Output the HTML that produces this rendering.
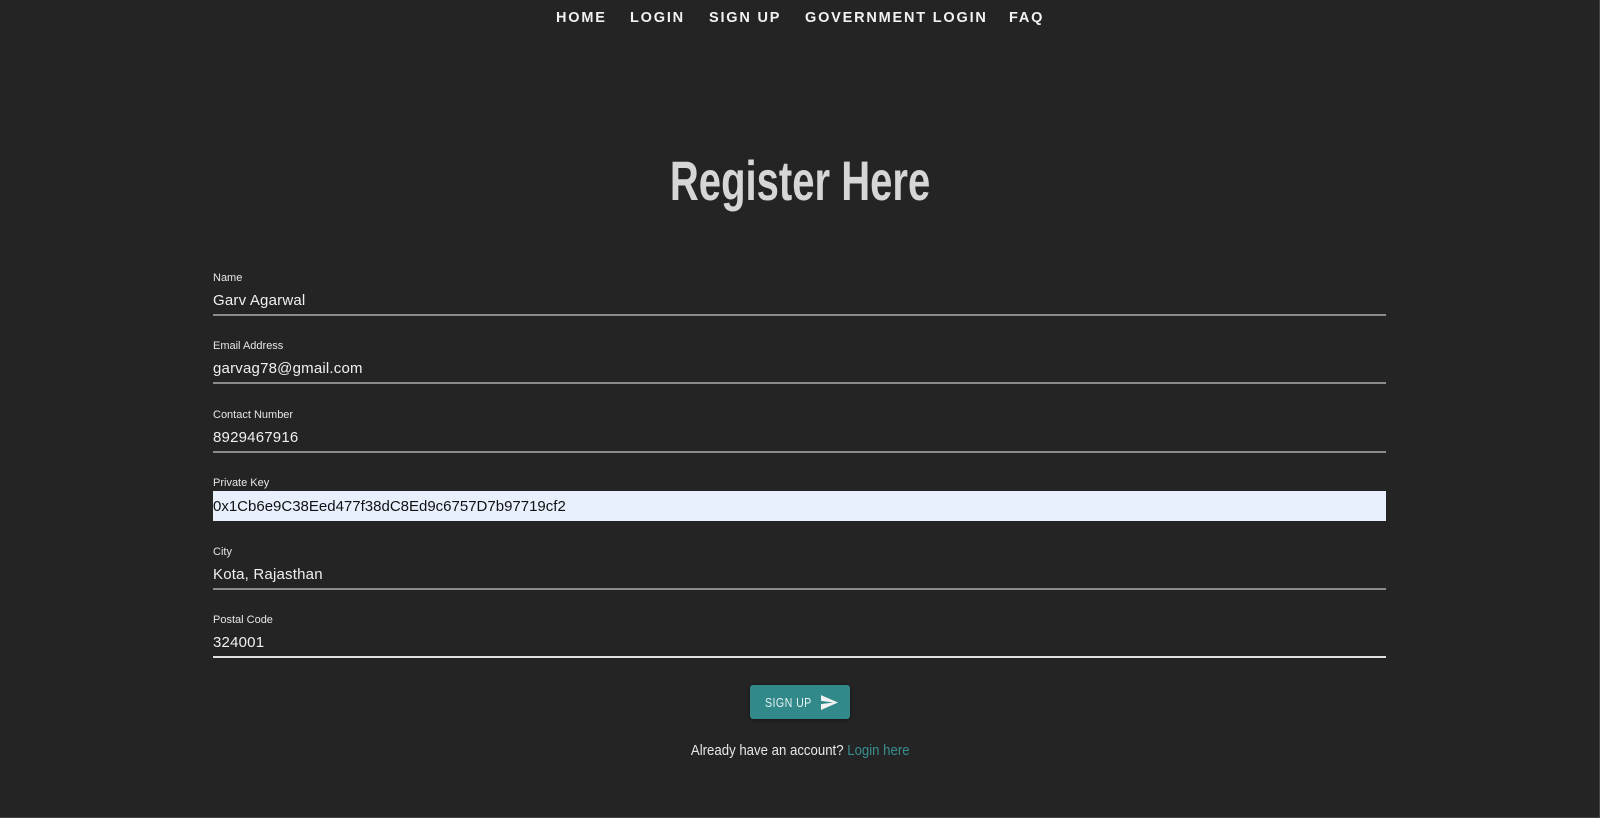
<!DOCTYPE html>
<html><head><meta charset="utf-8"><style>
html,body{margin:0;padding:0}
body{width:1600px;height:818px;background:#242424;position:relative;overflow:hidden;font-family:"Liberation Sans",Arial,sans-serif;box-sizing:border-box;border-right:1px solid #444;border-bottom:1px solid #444}
.nav{position:absolute;top:9px;font-size:14.5px;font-weight:bold;color:#f2f2f2;letter-spacing:1.8px;line-height:18px;white-space:nowrap}
.title{position:absolute;left:0;width:1600px;top:147px;text-align:center;line-height:68px}
.title span{display:inline-block;font-weight:bold;font-size:56px;color:#d6d6d6;transform:scaleX(0.715)}
.f{position:absolute;left:213px;width:1173px;height:48px}
.f .l{position:absolute;top:1px;left:0;font-size:11px;line-height:14px;color:#e6e6e6}
.f .v{position:absolute;top:21px;left:0;font-size:15px;line-height:20px;color:#f0f0f0;letter-spacing:0.2px}
.f .u{position:absolute;top:44px;left:0;right:0;height:2px;background:#8c8c8c}
.f.hl .bg{position:absolute;top:16px;left:0;right:0;height:30px;background:#e8f0fe}
.f.hl .v{color:#111;top:22px;letter-spacing:0}
.btn{position:absolute;left:750px;top:685px;width:100px;height:34px;background:#318a89;border-radius:3px;color:#e8f2f2;font-size:13px;line-height:34px;box-shadow:0 1px 3px rgba(0,0,0,.4)}
.btn span{position:absolute;left:15px;top:1px;transform:scaleX(0.82);transform-origin:left center;letter-spacing:0.5px}
.btn svg{position:absolute;left:71px;top:10px}
.acc{position:absolute;left:0;width:1600px;top:741px;text-align:center;line-height:20px}
.acc span{display:inline-block;font-size:15px;color:#e8e8e8;transform:scaleX(0.88)}
.acc a{color:#3b8e8e;text-decoration:none}
</style></head><body>
<div class="nav" style="left:556px">HOME</div>
<div class="nav" style="left:630px">LOGIN</div>
<div class="nav" style="left:709px">SIGN UP</div>
<div class="nav" style="left:805px">GOVERNMENT LOGIN</div>
<div class="nav" style="left:1009px">FAQ</div>

<div class="title"><span>Register Here</span></div>

<div class="f" style="top:270px"><div class="l">Name</div><div class="v">Garv Agarwal</div><div class="u"></div></div>
<div class="f" style="top:338px"><div class="l">Email Address</div><div class="v">garvag78@gmail.com</div><div class="u"></div></div>
<div class="f" style="top:407px"><div class="l">Contact Number</div><div class="v">8929467916</div><div class="u"></div></div>
<div class="f hl" style="top:475px"><div class="l">Private Key</div><div class="bg"></div><div class="v">0x1Cb6e9C38Eed477f38dC8Ed9c6757D7b97719cf2</div></div>
<div class="f" style="top:544px"><div class="l">City</div><div class="v">Kota, Rajasthan</div><div class="u"></div></div>
<div class="f" style="top:612px"><div class="l">Postal Code</div><div class="v">324001</div><div class="u" style="background:#e0e0e0"></div></div>

<div class="btn"><span>SIGN UP</span><svg width="17" height="15" viewBox="0 0 24 21"><path d="M0 21 L24 10.5 L0 0 L0 8.2 L17 10.5 L0 12.8 Z" fill="#f2f2f2"/></svg></div>

<div class="acc"><span>Already have an account? <a>Login here</a></span></div>
</body></html>
